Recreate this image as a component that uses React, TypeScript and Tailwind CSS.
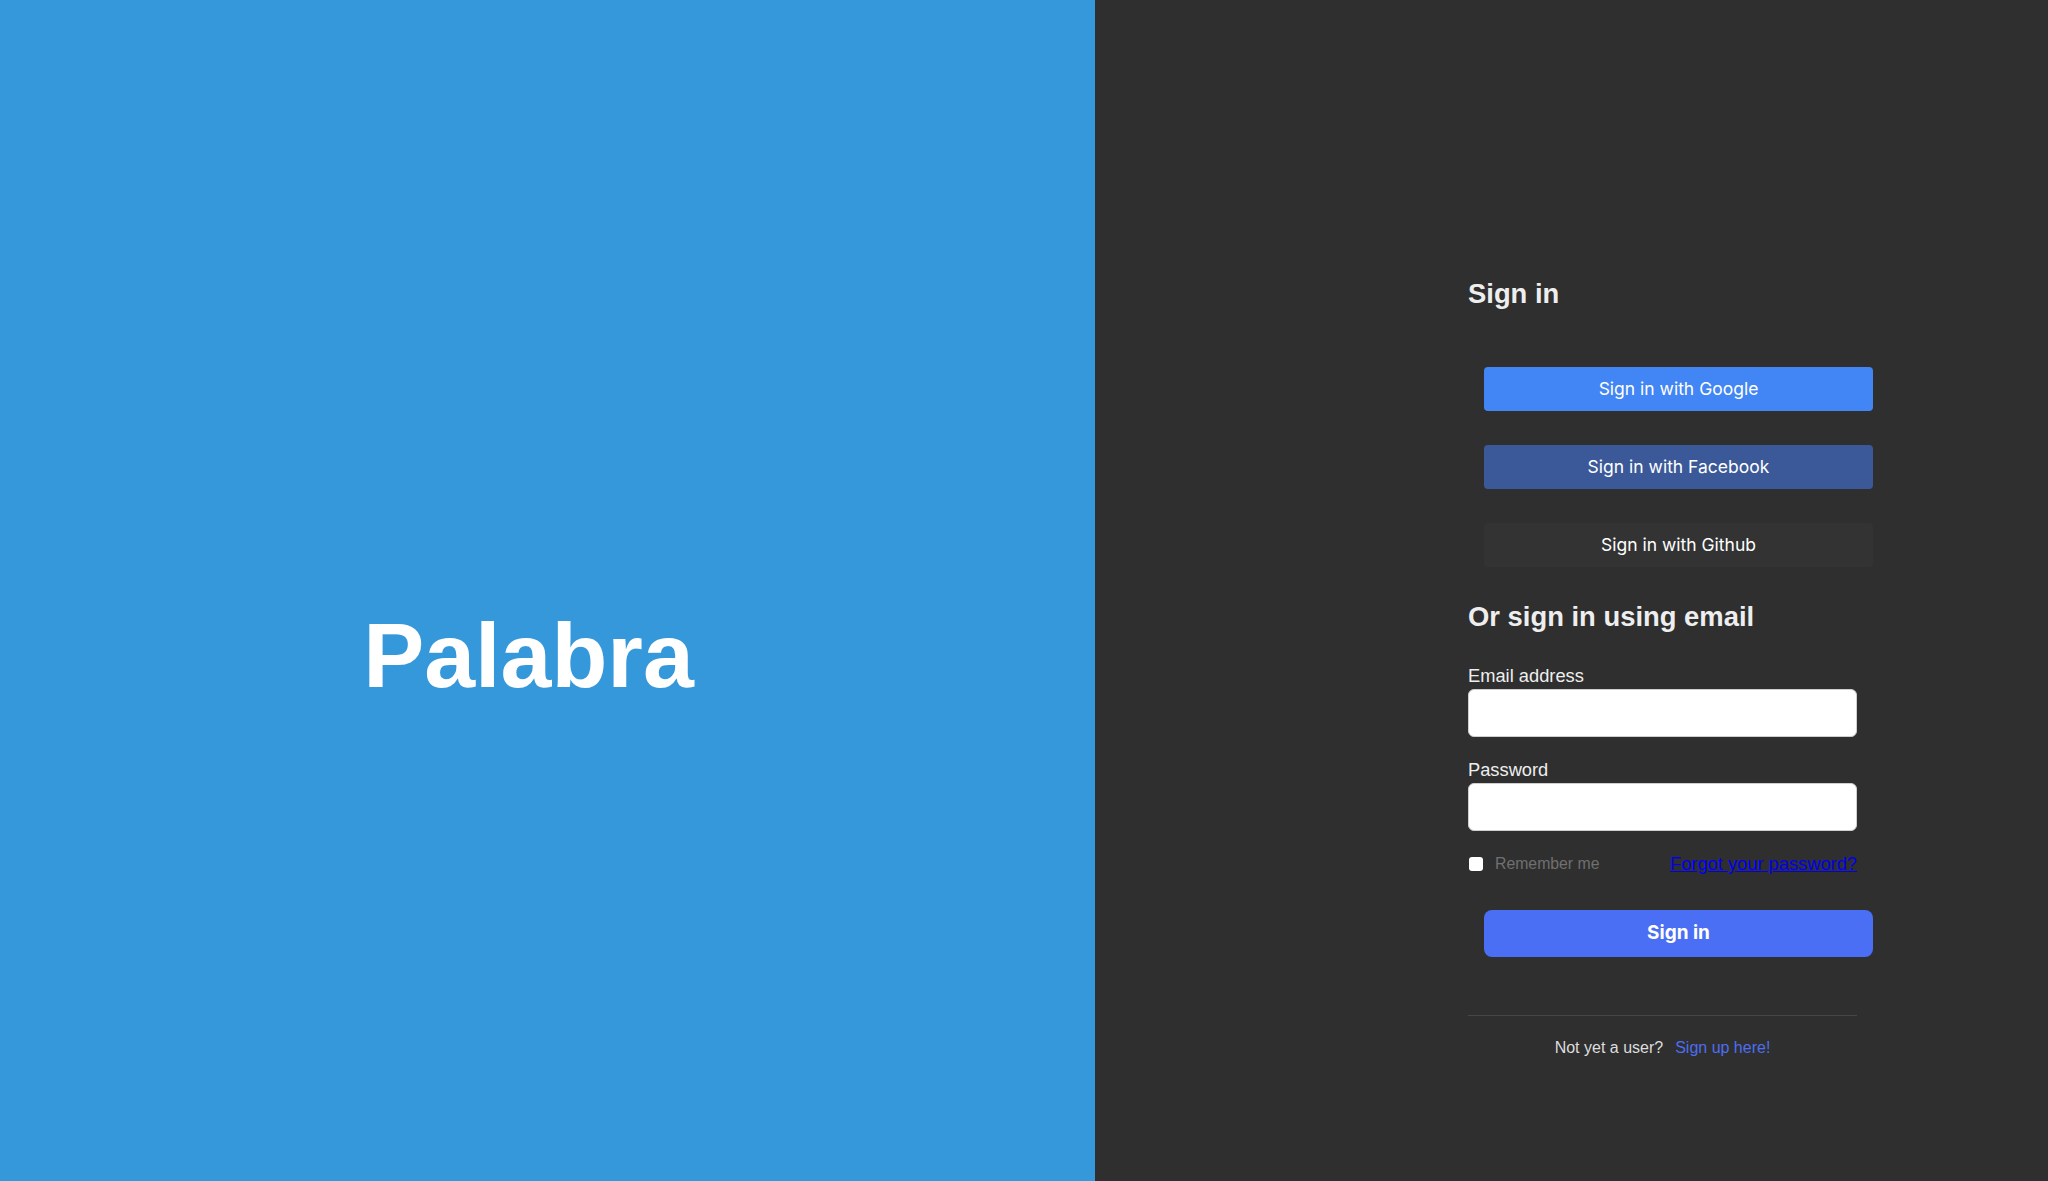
export default function App() {
  return (
    <div className="flex h-[1181px] w-full font-['Liberation_Sans',Arial,sans-serif]">
      {/* brand panel */}
      <div className="flex w-[1095px] shrink-0 items-center justify-center bg-[#3498db] pt-[131px] pr-[38px]">
        <h1 className="text-[91.5px] font-bold leading-none text-white">Palabra</h1>
      </div>

      {/* sign in panel */}
      <div className="flex-1 bg-[#2f2f2f] pl-[373px] pt-[280px]">
        <div className="flex w-[405px] flex-col">
          <h2 className="text-[27.4px] font-bold leading-[28px] text-[#eeeeee]">Sign in</h2>

          <button className="ml-[16px] mt-[59px] h-[44px] w-[389px] rounded-[4px] bg-[#4285f4] font-['Inter',sans-serif] text-[17.5px] text-white">
            Sign in with Google
          </button>
          <button className="ml-[16px] mt-[34px] h-[44px] w-[389px] rounded-[4px] bg-[#3b5998] font-['Inter',sans-serif] text-[17.5px] text-white">
            Sign in with Facebook
          </button>
          <button className="ml-[16px] mt-[34px] h-[44px] w-[389px] rounded-[4px] bg-[#333333] font-['Inter',sans-serif] text-[17.5px] text-white">
            Sign in with Github
          </button>

          <h2 className="mt-[36px] text-[27.4px] font-bold leading-[27px] text-[#eeeeee]">
            Or sign in using email
          </h2>

          <form className="flex w-[389px] flex-col" onSubmit={(e) => e.preventDefault()}>
            <label className="mt-[37px] text-[18.3px] leading-[18px] text-[#eeeeee]">Email address</label>
            <input
              type="email"
              className="mt-[4px] h-[48px] w-full rounded-[6px] border border-[#cfcfcf] bg-white px-3 outline-none"
            />

            <label className="mt-[24px] text-[18.3px] leading-[18px] text-[#eeeeee]">Password</label>
            <input
              type="password"
              className="mt-[4px] h-[48px] w-full rounded-[6px] border border-[#cfcfcf] bg-white px-3 outline-none"
            />

            <div className="mt-[23px] flex h-[20px] items-center justify-between">
              <label className="flex items-center gap-[12px] pl-[1px] text-[15.8px] leading-[20px] text-[#707070]">
                <input type="checkbox" className="h-[14px] w-[14px] appearance-none rounded-[3px] bg-white" />
                Remember me
              </label>
              <a href="#" className="text-[18.3px] leading-[20px] text-[#0000ee] underline">
                Forgot your password?
              </a>
            </div>
          </form>

          <button className="ml-[16px] mt-[36px] h-[47px] w-[389px] rounded-[8px] bg-[#4a6ef4] font-['Inter',sans-serif] text-[19px] font-bold text-white">
            Sign in
          </button>

          <hr className="mt-[58px] w-[389px] border-t border-[#474747]" />

          <p className="mt-[22px] w-[389px] text-center text-[16px] leading-[20px] text-[#dddddd]">
            Not yet a user?
            <a href="#" className="ml-[12px] text-[#4d6ef0]">
              Sign up here!
            </a>
          </p>
        </div>
      </div>
    </div>
  );
}
